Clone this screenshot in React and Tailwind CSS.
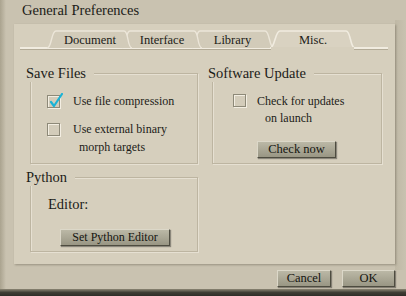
import React from "react";

function Check({ checked }) {
  return (
    <div className="relative w-[13px] h-[13px] shrink-0 border border-[#8d8978] bg-[#d3ccba] shadow-[inset_1px_1px_0_#f3eee2,1px_1px_0_#f3eee2]">
      {checked && (
        <svg
          className="absolute -top-[3px] left-[1px]"
          width="14"
          height="15"
          viewBox="0 0 14 15"
        >
          <path
            d="M2 9 L5 13 L13 1"
            fill="none"
            stroke="#1ab3d6"
            strokeWidth="2.2"
            strokeLinecap="round"
            strokeLinejoin="round"
          />
        </svg>
      )}
    </div>
  );
}

function Button({ children, className }) {
  return (
    <button
      className={
        "h-[17px] text-[12.5px] leading-none text-[#151510] bg-gradient-to-b from-[#bbb8a6] to-[#999684] border border-t-[#dcd8c9] border-l-[#dcd8c9] border-r-[#4e4c40] border-b-[#4e4c40] shadow-[1px_1px_1px_rgba(0,0,0,0.35)] " +
        className
      }
    >
      {children}
    </button>
  );
}

function Group({ title, className, children }) {
  return (
    <div
      className={
        "relative border border-[#bdb5a1] shadow-[1px_1px_0_#e6e0d2,inset_1px_1px_0_#e6e0d2] " +
        className
      }
    >
      <span className="absolute -left-[5px] -top-[10px] bg-[#d6cfbd] pr-[8px] text-[14.5px] leading-[18px] text-[#1c1c18]">
        {title}
      </span>
      {children}
    </div>
  );
}

function tab(bl, tl, tr, br) {
  return `M${bl},24 C${bl + 5},24 ${tl - 5},7 ${tl},7 L${tr},7 C${tr + 5},7 ${br - 5},24 ${br},24 Z`;
}

function TabStrip() {
  const labels = [
    { t: "Document", x: 42, w: 68 },
    { t: "Interface", x: 116, w: 64 },
    { t: "Library", x: 186, w: 65 },
    { t: "Misc.", x: 266, w: 66 },
  ];
  return (
    <div className="relative h-[26px]">
      <svg className="absolute inset-0" width="381" height="26" viewBox="0 0 381 26">
        <line x1="6" y1="25.5" x2="374" y2="25.5" stroke="#b3ab97" strokeWidth="1" />
        <line x1="6" y1="24" x2="374" y2="24" stroke="#f1ece0" strokeWidth="2" />
        {[
          [178, 186, 251, 260],
          [108, 116, 180, 188],
          [33, 42, 110, 118],
        ].map((p, i) => (
          <g key={i}>
            <path d={tab(...p)} fill="#d2cbb9" stroke="none" />
            <path
              d={tab(...p).replace(" Z", "")}
              fill="none"
              stroke="#ece6d9"
              strokeWidth="1.4"
            />
          </g>
        ))}
        <path d={tab(256, 266, 332, 341)} fill="#d9d2c1" stroke="none" />
        <path
          d={tab(256, 266, 332, 341).replace(" Z", "")}
          fill="none"
          stroke="#f1ece0"
          strokeWidth="1.6"
        />
        <rect x="257" y="23" width="83" height="4" fill="#d6cfbd" />
      </svg>
      <div className="relative flex h-full">
        {labels.map((l) => (
          <span
            key={l.t}
            className="absolute top-[9px] text-center text-[12.5px] leading-[15px] text-[#1c1c18]"
            style={{ left: l.x, width: l.w }}
          >
            {l.t}
          </span>
        ))}
      </div>
    </div>
  );
}

export default function App() {
  return (
    <div className="relative w-[406px] h-[296px] overflow-hidden bg-[#c9c2b0] [font-family:'Liberation_Serif',serif] text-[#1c1c18]">
      <div className="absolute left-0 top-0 w-[6px] h-full bg-gradient-to-r from-[#aaa38f] to-[#c9c2b0]" />
      <div className="absolute right-0 top-[20px] w-[11px] h-[250px] bg-gradient-to-r from-[#bfb8a5] to-[#c9c2b0]" />

      <div className="relative h-[24px] pl-[22px] pt-[2px] text-[14.5px] leading-[17px]">
        General Preferences
      </div>

      <div className="relative ml-[14px] w-[381px] h-[240px] bg-[#d6cfbd] shadow-[1px_1px_2px_rgba(60,55,40,0.35)]">
        <TabStrip />

        <div className="flex gap-[14px] pl-[16px] mt-[23px]">
          <Group title="Save Files" className="w-[168px] h-[91px]">
            <div className="flex items-center pl-[16px] pt-[19px]">
              <Check checked />
              <span className="ml-[13px] text-[12px] leading-[16px]">
                Use file compression
              </span>
            </div>
            <div className="flex items-start pl-[16px] pt-[11px]">
              <div className="mt-[3px]">
                <Check />
              </div>
              <div className="ml-[13px] text-[12px] leading-[18px]">
                <div>Use external binary</div>
                <div className="pl-[6px]">morph targets</div>
              </div>
            </div>
          </Group>

          <Group title="Software Update" className="w-[170px] h-[91px]">
            <div className="flex items-start pl-[20px] pt-[19px]">
              <div className="mt-[1px]">
                <Check />
              </div>
              <div className="ml-[11px] text-[12px] leading-[17px]">
                <div>Check for updates</div>
                <div className="pl-[8px]">on launch</div>
              </div>
            </div>
            <div className="pl-[44px] pt-[9px]">
              <Button className="w-[79px]">Check now</Button>
            </div>
          </Group>
        </div>

        <div className="pl-[16px] mt-[13px]">
          <Group title="Python" className="w-[168px] h-[75px]">
            <div className="pl-[17px] pt-[16px] text-[14.5px] leading-[20px]">
              Editor:
            </div>
            <div className="pl-[29px] pt-[10px]">
              <Button className="w-[110px] text-[12px]">Set Python Editor</Button>
            </div>
          </Group>
        </div>
      </div>

      <div className="relative flex justify-end gap-[11px] pr-[11px] mt-[6px]">
        <Button className="w-[54px] h-[17px]">Cancel</Button>
        <Button className="w-[53px] h-[17px]">OK</Button>
      </div>

      <div className="absolute left-0 bottom-0 w-full h-[7px] bg-gradient-to-b from-[#8d8775] via-[#3f3d34] to-[#2e2d27]" />
    </div>
  );
}
